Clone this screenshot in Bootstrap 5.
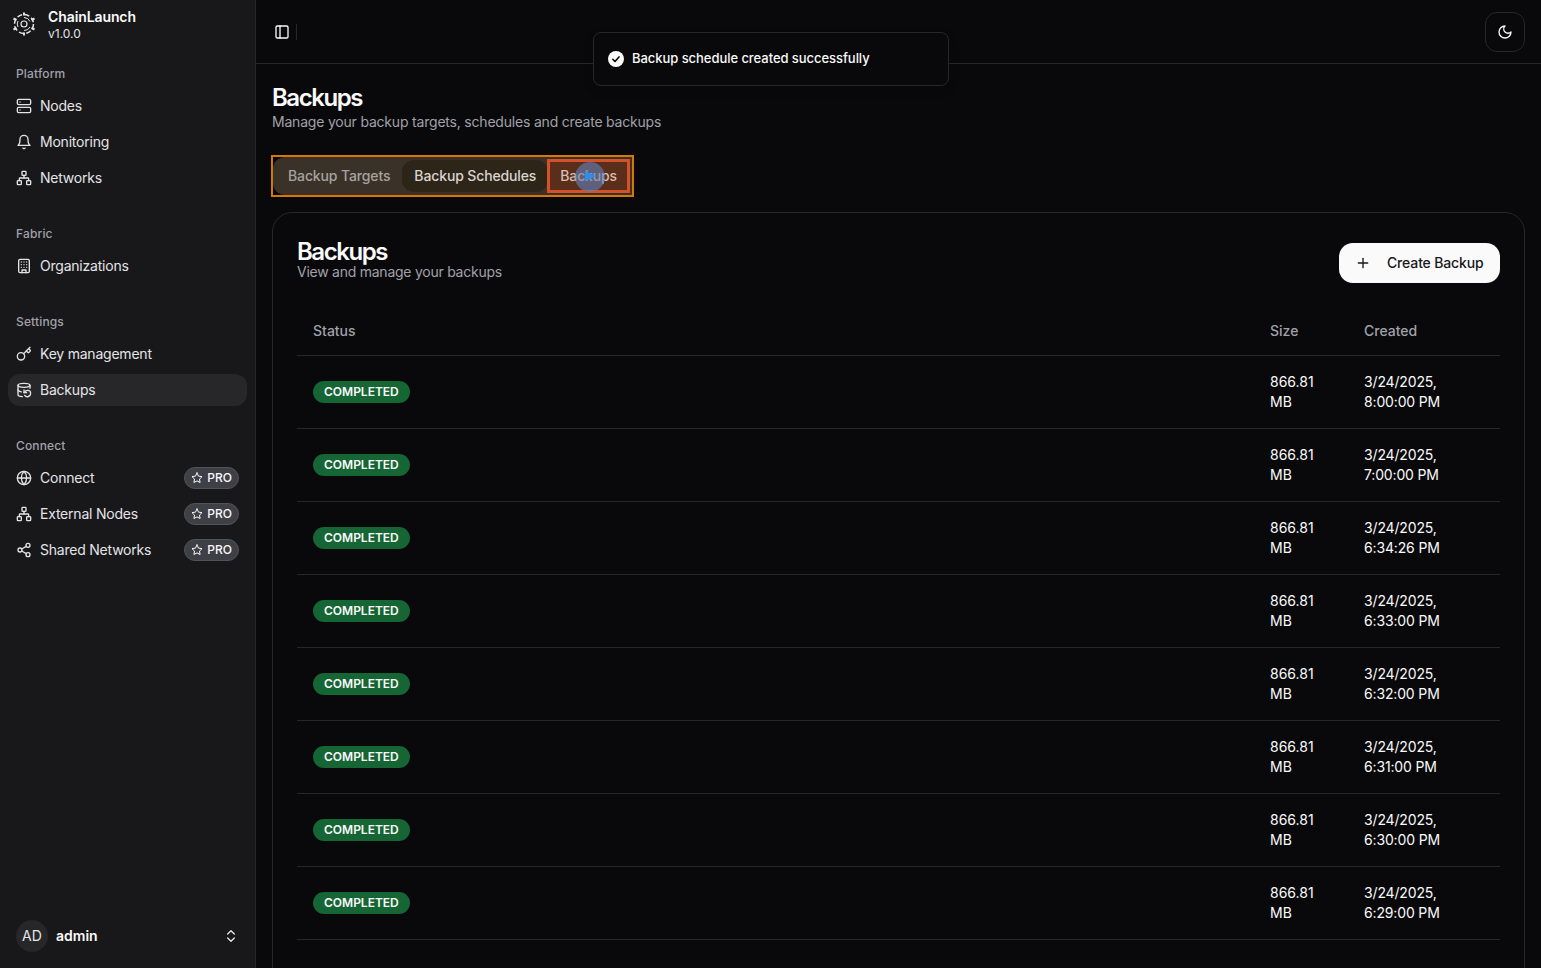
<!DOCTYPE html>
<html lang="en">
<head>
<meta charset="UTF-8">
<title>Backups - ChainLaunch</title>
<link rel="stylesheet" href="https://cdn.jsdelivr.net/npm/bootstrap@5.3.0/dist/css/bootstrap.min.css">
<style>
html, body { height: 968px; overflow: hidden; }
body { background: #09090b; color: #fafafa; font-family: Inter, "Liberation Sans", sans-serif; font-size: 14px; }
svg.ico { width: 16px; height: 16px; fill: none; stroke: currentColor; stroke-width: 2; stroke-linecap: round; stroke-linejoin: round; flex-shrink: 0; }
.app-shell { height: 968px; }
.side-bar { width: 256px; flex-shrink: 0; background: #18181b; border-right: 1px solid #27272a; color: #e4e4e7; height: 968px; }
.brand-row { height: 50px; padding: 8px 0 0 12px; gap: 12px; }
.brand-name { font-size: 14px; font-weight: 600; line-height: 18px; color: #fafafa; letter-spacing: -0.1px; }
.brand-ver { font-size: 12px; line-height: 16px; }
.nav-group { padding: 8px; margin-bottom: 4px; }
.group-title { height: 32px; padding: 0 8px; font-size: 12px; font-weight: 500; line-height: 32px; color: #a1a1aa; letter-spacing: .15px; }
.nav-entry { height: 32px; margin-bottom: 4px; padding: 0 8px 2px; gap: 8px; border-radius: 12px; color: #e4e4e7; text-decoration: none; letter-spacing: -0.22px; }
.nav-entry > svg.ico { margin-top: 2px; }
.nav-entry.active-entry { background: #27272a; }
.pro-tag { height: 22px; margin-top: 2px; padding: 0 6px; gap: 4px; border: 1px solid #52525b; border-radius: 11px; background: #3f3f46; font-size: 12px; font-weight: 500; color: #fafafa; letter-spacing: 0; }
.pro-tag svg.ico { width: 12px; height: 12px; }
.user-row { padding: 0 16px; height: 32px; gap: 8px; margin-bottom: 16px; }
.avatar-dot { width: 32px; height: 32px; padding-bottom: 2px; border-radius: 50%; background: #27272a; }
.user-name { padding-bottom: 2px; font-weight: 600; color: #fafafa; }
.main-pane { min-width: 0; height: 968px; overflow: hidden; }
.top-bar { height: 64px; padding: 0 16px 0 18px; border-bottom: 1px solid #27272a; }
.top-sep { width: 1px; height: 16px; background: #27272a; margin-left: 6px; }
.theme-btn { width: 40px; height: 40px; border: 1px solid #27272a; border-radius: 12px; background: #09090b; color: #fafafa; }
.page-body { padding: 16px; }
.page-title { font-size: 24px; font-weight: 600; line-height: 29px; letter-spacing: -1.45px; margin: 3px 0 0; }
.page-sub { color: #a1a1aa; line-height: 20px; margin-bottom: 23px; letter-spacing: -0.2px; }
.tab-strip { width: 363px; height: 42px; margin-left: -1px; border: 2px solid #d97706; background: #09090b; color: #a8a29e; }
.tab-inner { height: 38px; padding: 0 3px; background: #3a3229; border-radius: 12px 0 0 12px; white-space: nowrap; }
.tab-item { height: 32px; padding: 0 12px 2px; font-weight: 500; border-radius: 12px; letter-spacing: -0.13px; }
.tab-item.current-tab { background: #2e2519; color: #d9d5cf; }
.tab-hot { position: relative; background: #5a2e1a; outline: 3px solid #d4522a; outline-offset: -2px; border-radius: 0; color: #d6bfb0; }
.cursor-halo { position: absolute; left: 27px; top: 2px; width: 30px; height: 30px; border-radius: 50%; background: rgba(96,130,190,.6); }
.cursor-dot { position: absolute; left: 37px; top: 11px; width: 0; height: 0; border-left: 11px solid #2f8fe8; border-top: 5px solid transparent; border-bottom: 5px solid transparent; }
.backup-card { margin-top: 15px; border: 1px solid #27272a; border-radius: 20px; background: #09090b; padding: 24px; height: 800px; }
.card-name { font-size: 24px; font-weight: 600; line-height: 23px; letter-spacing: -1.45px; margin: 3px 0 0; }
.card-sub { color: #a1a1aa; line-height: 18px; letter-spacing: -0.25px; }
.make-btn { width: 161px; height: 40px; gap: 16px; padding: 0 16px 2px; margin-top: 6px; background: #fafafa; color: #18181b; border-radius: 14px; font-weight: 500; border: 0; white-space: nowrap; letter-spacing: -0.15px; }
.make-btn svg.ico { margin-top: 2px; }
.backup-table { margin: 24px 0 0; --bs-table-bg: transparent; --bs-table-color: #fafafa; table-layout: fixed; }
.backup-table th { height: 48px; padding: 0 16px; color: #a1a1aa; font-weight: 500; vertical-align: middle; border-bottom: 1px solid #27272a; }
.backup-table td { height: 73px; padding: 16px; line-height: 20px; vertical-align: middle; border-bottom: 1px solid #27272a; }
.backup-table .date-cell { letter-spacing: -0.15px; }
.state-pill { display: inline-block; height: 22px; padding: 0 11px; border-radius: 11px; background: #166534; color: #fafafa; font-size: 12px; font-weight: 600; line-height: 21px; }
.toast-box { position: absolute; left: 593px; top: 32px; width: 356px; height: 54px; padding: 0 14px; gap: 8px; border: 1px solid #27272a; border-radius: 8px; background: #09090b; font-size: 13px; font-weight: 500; letter-spacing: -0.05px; box-shadow: 0 4px 12px rgba(0,0,0,.1); }
</style>
</head>
<body>
<div class="app-shell d-flex">
  <aside class="side-bar d-flex flex-column">
    <div class="brand-row d-flex align-items-start">
      <svg width="24" height="24" viewBox="0 0 24 24" fill="none" stroke="#e4e4e7" stroke-width="1.5" class="mt-1 flex-shrink-0">
        <circle cx="12" cy="12" r="9.500" stroke-dasharray="5 2.500"/>
        <circle cx="12" cy="12" r="3" stroke-width="1.200"/>
        <path d="M12 .5v3M12 20.500v3M1.500 6.500l3 1.500M19.500 16l3 1.500M1.500 17.500l3-1.500M19.500 8l3-1.500" stroke-width="2"/>
        <path d="M12 5.500a6.500 6.500 0 0 1 6 4M18 15a6.500 6.500 0 0 1-6 3.500M6 15a6.500 6.500 0 0 1 0-6" stroke-width="1"/>
      </svg>
      <div>
        <div class="brand-name">ChainLaunch</div>
        <div class="brand-ver">v1.0.0</div>
      </div>
    </div>

    <div class="nav-group">
      <div class="group-title">Platform</div>
      <a class="nav-entry d-flex align-items-center" href="#"><svg class="ico" viewBox="0 0 24 24"><rect x="2" y="2" width="20" height="8" rx="2"/><rect x="2" y="14" width="20" height="8" rx="2"/><path d="M6 6h.01M6 18h.01"/></svg>Nodes</a>
      <a class="nav-entry d-flex align-items-center" href="#"><svg class="ico" viewBox="0 0 24 24"><path d="M6 8a6 6 0 0 1 12 0c0 7 3 9 3 9H3s3-2 3-9"/><path d="M10.300 21a1.940 1.940 0 0 0 3.400 0"/></svg>Monitoring</a>
      <a class="nav-entry d-flex align-items-center" href="#"><svg class="ico" viewBox="0 0 24 24"><rect x="16" y="16" width="6" height="6" rx="1"/><rect x="2" y="16" width="6" height="6" rx="1"/><rect x="9" y="2" width="6" height="6" rx="1"/><path d="M5 16v-3a1 1 0 0 1 1-1h12a1 1 0 0 1 1 1v3"/><path d="M12 12V8"/></svg>Networks</a>
    </div>

    <div class="nav-group">
      <div class="group-title">Fabric</div>
      <a class="nav-entry d-flex align-items-center" href="#"><svg class="ico" viewBox="0 0 24 24"><rect x="4" y="2" width="16" height="20" rx="2"/><path d="M9 22v-4h6v4M8 6h.01M16 6h.01M12 6h.01M12 10h.01M12 14h.01M16 10h.01M16 14h.01M8 10h.01M8 14h.01"/></svg>Organizations</a>
    </div>

    <div class="nav-group">
      <div class="group-title">Settings</div>
      <a class="nav-entry d-flex align-items-center" href="#"><svg class="ico" viewBox="0 0 24 24"><path d="m15.500 7.500 2.300 2.300a1 1 0 0 0 1.400 0l2.100-2.100a1 1 0 0 0 0-1.400L19 4"/><path d="m21 2-9.600 9.600"/><circle cx="7.500" cy="15.500" r="5.500"/></svg>Key management</a>
      <a class="nav-entry active-entry d-flex align-items-center" href="#"><svg class="ico" viewBox="0 0 24 24"><ellipse cx="12" cy="5" rx="9" ry="3"/><path d="M3 12a9 3 0 0 0 5 2.690"/><path d="M21 9.300V5"/><path d="M3 5v14a9 3 0 0 0 6.470 2.880"/><path d="M12 12v4h4"/><path d="M13 20a5 5 0 0 0 9-3 4.500 4.500 0 0 0-4.500-4.500c-1.330 0-2.540.54-3.410 1.410L12 16"/></svg>Backups</a>
    </div>

    <div class="nav-group">
      <div class="group-title">Connect</div>
      <a class="nav-entry d-flex align-items-center" href="#"><svg class="ico" viewBox="0 0 24 24"><circle cx="12" cy="12" r="10"/><path d="M12 2a14.500 14.500 0 0 0 0 20 14.500 14.500 0 0 0 0-20"/><path d="M2 12h20"/></svg>Connect<span class="pro-tag d-flex align-items-center ms-auto"><svg class="ico" viewBox="0 0 24 24"><polygon points="12 2 15.090 8.260 22 9.270 17 14.140 18.180 21.020 12 17.770 5.820 21.020 7 14.140 2 9.270 8.910 8.260 12 2"/></svg>PRO</span></a>
      <a class="nav-entry d-flex align-items-center" href="#"><svg class="ico" viewBox="0 0 24 24"><rect x="16" y="16" width="6" height="6" rx="1"/><rect x="2" y="16" width="6" height="6" rx="1"/><rect x="9" y="2" width="6" height="6" rx="1"/><path d="M5 16v-3a1 1 0 0 1 1-1h12a1 1 0 0 1 1 1v3"/><path d="M12 12V8"/></svg>External Nodes<span class="pro-tag d-flex align-items-center ms-auto"><svg class="ico" viewBox="0 0 24 24"><polygon points="12 2 15.090 8.260 22 9.270 17 14.140 18.180 21.020 12 17.770 5.820 21.020 7 14.140 2 9.270 8.910 8.260 12 2"/></svg>PRO</span></a>
      <a class="nav-entry d-flex align-items-center" href="#"><svg class="ico" viewBox="0 0 24 24"><circle cx="18" cy="5" r="3"/><circle cx="6" cy="12" r="3"/><circle cx="18" cy="19" r="3"/><path d="M8.590 13.510l6.830 3.980M15.410 6.510l-6.820 3.980"/></svg>Shared Networks<span class="pro-tag d-flex align-items-center ms-auto"><svg class="ico" viewBox="0 0 24 24"><polygon points="12 2 15.090 8.260 22 9.270 17 14.140 18.180 21.020 12 17.770 5.820 21.020 7 14.140 2 9.270 8.910 8.260 12 2"/></svg>PRO</span></a>
    </div>

    <div class="user-row d-flex align-items-center mt-auto">
      <div class="avatar-dot d-flex align-items-center justify-content-center">AD</div>
      <span class="user-name">admin</span>
      <svg class="ico ms-auto" viewBox="0 0 24 24"><path d="m7 15 5 5 5-5"/><path d="m7 9 5-5 5 5"/></svg>
    </div>
  </aside>

  <main class="main-pane flex-grow-1">
    <header class="top-bar d-flex align-items-center">
      <svg class="ico" viewBox="0 0 24 24"><rect x="3" y="3" width="18" height="18" rx="2"/><path d="M9 3v18"/></svg>
      <span class="top-sep"></span>
      <button class="theme-btn d-flex align-items-center justify-content-center ms-auto" type="button"><svg class="ico" viewBox="0 0 24 24"><path d="M12 3a6 6 0 0 0 9 9 9 9 0 1 1-9-9Z"/></svg></button>
    </header>

    <div class="page-body">
      <h1 class="page-title">Backups</h1>
      <div class="page-sub">Manage your backup targets, schedules and create backups</div>

      <div class="tab-strip">
        <div class="tab-inner d-flex align-items-center">
          <div class="tab-item d-flex align-items-center">Backup Targets</div>
          <div class="tab-item current-tab d-flex align-items-center">Backup Schedules</div>
          <div class="tab-item tab-hot d-flex align-items-center">Backups<span class="cursor-halo"></span><span class="cursor-dot"></span></div>
        </div>
      </div>

      <section class="backup-card">
        <div class="d-flex justify-content-between align-items-start">
          <div>
            <h2 class="card-name">Backups</h2>
            <div class="card-sub">View and manage your backups</div>
          </div>
          <button class="make-btn d-flex align-items-center" type="button"><svg class="ico" viewBox="0 0 24 24"><path d="M5 12h14"/><path d="M12 5v14"/></svg>Create Backup</button>
        </div>

        <table class="table backup-table">
          <colgroup><col><col style="width:94px"><col style="width:152px"></colgroup>
          <thead><tr><th>Status</th><th>Size</th><th>Created</th></tr></thead>
          <tbody id="rows"></tbody>
        </table>
      </section>
    </div>
  </main>
</div>

<div class="toast-box d-flex align-items-center">
  <svg width="16" height="16" viewBox="0 0 16 16" class="flex-shrink-0"><circle cx="8" cy="8" r="8" fill="#fafafa"/><path d="M4.800 8.300l2.200 2.200 4-4.600" fill="none" stroke="#09090b" stroke-width="1.600" stroke-linecap="round" stroke-linejoin="round"/></svg>
  <span>Backup schedule created successfully</span>
</div>

<script>
  let times = ['8:00:00 PM', '7:00:00 PM', '6:34:26 PM', '6:33:00 PM', '6:32:00 PM', '6:31:00 PM', '6:30:00 PM', '6:29:00 PM'];
  document.getElementById('rows').innerHTML = times.map(t =>
    '<tr><td><span class="state-pill">COMPLETED</span></td><td>866.81 MB</td><td class="date-cell">3/24/2025, ' + t + '</td></tr>'
  ).join('');
</script>
<script src="https://cdn.jsdelivr.net/npm/bootstrap@5.3.0/dist/js/bootstrap.bundle.min.js"></script>
</body>
</html>
